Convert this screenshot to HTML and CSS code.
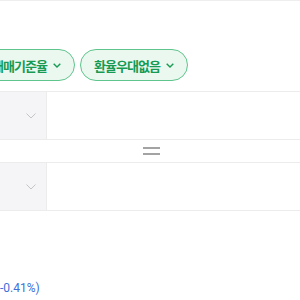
FILE: index.html
```html
<!DOCTYPE html>
<html lang="ko">
<head>
<meta charset="utf-8">
<link rel="stylesheet" href="styles.css">
</head>
<body>
<div class="page">
  <div class="filters">
    <button class="pill">매매기준율
      <svg class="chev" viewBox="0 0 8 5" width="8" height="5"><path d="M0.7 0.7 L4 4 L7.3 0.7" fill="none" stroke="currentColor" stroke-width="1.4"/></svg>
    </button>
    <button class="pill">환율우대없음
      <svg class="chev" viewBox="0 0 8 5" width="8" height="5"><path d="M0.7 0.7 L4 4 L7.3 0.7" fill="none" stroke="currentColor" stroke-width="1.4"/></svg>
    </button>
  </div>
  <div class="calc">
    <div class="row">
      <div class="cur">
        <svg class="cchev" viewBox="0 0 10 6" width="10" height="6"><path d="M0.5 0.5 L5 5 L9.5 0.5" fill="none" stroke="currentColor" stroke-width="1"/></svg>
      </div>
      <div class="amount"></div>
    </div>
    <div class="eq"><span class="bar"></span><span class="bar"></span></div>
    <div class="row">
      <div class="cur">
        <svg class="cchev" viewBox="0 0 10 6" width="10" height="6"><path d="M0.5 0.5 L5 5 L9.5 0.5" fill="none" stroke="currentColor" stroke-width="1"/></svg>
      </div>
      <div class="amount"></div>
    </div>
  </div>
  <div class="change">-0.41%)</div>
</div>
</body>
</html>
```
FILE: styles.css
```css
html, body {
  margin: 0;
  padding: 0;
  background: #fff;
}
body {
  font-family: "Noto Sans CJK KR", "Noto Sans", sans-serif;
  overflow: hidden;
}
.page {
  border-top: 1px solid #eeeeee;
  width: 300px;
}
.filters {
  display: flex;
  gap: 5px;
  margin: 48px 0 0 -22px;
  white-space: nowrap;
}
.pill {
  display: flex;
  align-items: center;
  gap: 6px;
  height: 32px;
  padding: 0 13px 0 13px;
  border: 1px solid #5ec58c;
  border-radius: 16px;
  background: #ebf8f0;
  color: #179a52;
  font-family: "Noto Sans CJK KR", sans-serif;
  font-size: 13px;
  letter-spacing: -0.95px;
  font-weight: 700;
  flex-shrink: 0;
}
.chev {
  display: block;
}
.calc {
  margin-top: 10px;
}
.row {
  display: flex;
  height: 47px;
  border-top: 1px solid #ececec;
  border-bottom: 1px solid #ececec;
}
.cur {
  width: 47px;
  background: #f5f5f7;
  border-right: 1px solid #ececec;
  display: flex;
  align-items: center;
  justify-content: flex-end;
  padding-right: 10px;
  box-sizing: border-box;
  color: #c4c4c8;
  flex-shrink: 0;
}
.amount {
  flex: 1;
}
.eq {
  height: 22px;
  display: flex;
  flex-direction: column;
  align-items: center;
  justify-content: center;
  gap: 4px;
  padding-left: 3px;
}
.bar {
  display: block;
  width: 17px;
  height: 2px;
  background: #a3a3a3;
}
.change {
  margin-top: 70px;
  margin-left: 0;
  font-family: "Roboto", "Noto Sans", sans-serif;
  font-size: 12px;
  color: #3d6fd9;
}
```
